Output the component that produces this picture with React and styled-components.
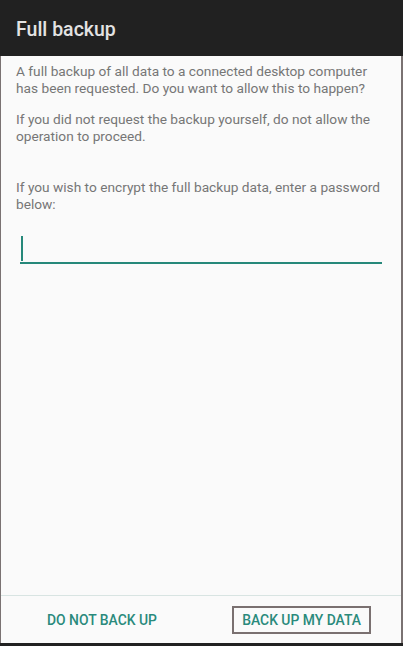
import React from "react";
import styled, { createGlobalStyle } from "styled-components";

const GlobalStyle = createGlobalStyle`
	html, body {
		margin: 0;
		padding: 0;
		background: #212121;
		font-family: Roboto, "Noto Sans", sans-serif;
	}
`;

const Screen = styled.div`
	width: 403px;
	height: 646px;
	display: flex;
	flex-direction: column;
	background: #212121;
	box-sizing: border-box;
`;

const TitleBar = styled.header`
	height: 56px;
	flex-shrink: 0;
	display: flex;
	align-items: center;
	padding: 2px 16px 0;
	box-sizing: border-box;
	background: #212121;
`;

const Title = styled.h1`
	margin: 0;
	font-size: 19.5px;
	font-weight: 500;
	color: #e3e3e3;
`;

const Body = styled.div`
	flex: 1;
	display: flex;
	flex-direction: column;
	background: #fafafa;
	border-left: 1px solid #7a7272;
	border-right: 2px solid #7a7272;
	margin-bottom: 3px;
`;

const Content = styled.div`
	flex: 1;
	padding: 7px 15px 0;
`;

const Paragraph = styled.p`
	margin: 0 0 ${(p) => p.$gap || 14}px;
	font-size: 13.7px;
	line-height: 17px;
	color: #767676;
`;

const Field = styled.div`
	margin: 0 4px;
	height: 28px;
	border-bottom: 2px solid #26887a;
	position: relative;
`;

const Cursor = styled.span`
	position: absolute;
	left: 1px;
	top: 2px;
	width: 2px;
	height: 25px;
	background: #26887a;
`;

const Footer = styled.div`
	border-top: 1px solid #d8e4e2;
	height: 47px;
	display: flex;
	align-items: center;
	padding: 0 30px 0 36px;
	justify-content: space-between;
`;

const ActionButton = styled.button`
	background: transparent;
	border: 2px solid ${(p) => (p.$focused ? "#7a7070" : "transparent")};
	padding: 0 8px;
	height: 28px;
	font-family: Roboto, "Noto Sans", sans-serif;
	font-size: 13.9px;
	font-weight: 500;
	color: #2a8a7c;
	cursor: pointer;
`;

export default function App() {
	return (
		<Screen>
			<GlobalStyle />
			<TitleBar>
				<Title>Full backup</Title>
			</TitleBar>
			<Body>
				<Content>
					<Paragraph>
						A full backup of all data to a connected desktop computer has been requested. Do you want to allow this to happen?
					</Paragraph>
					<Paragraph $gap={34}>
						If you did not request the backup yourself, do not allow the operation to proceed.
					</Paragraph>
					<Paragraph $gap={21}>
						If you wish to encrypt the full backup data, enter a password below:
					</Paragraph>
					<Field>
						<Cursor />
					</Field>
				</Content>
				<Footer>
					<ActionButton>DO NOT BACK UP</ActionButton>
					<ActionButton $focused>BACK UP MY DATA</ActionButton>
				</Footer>
			</Body>
		</Screen>
	);
}
